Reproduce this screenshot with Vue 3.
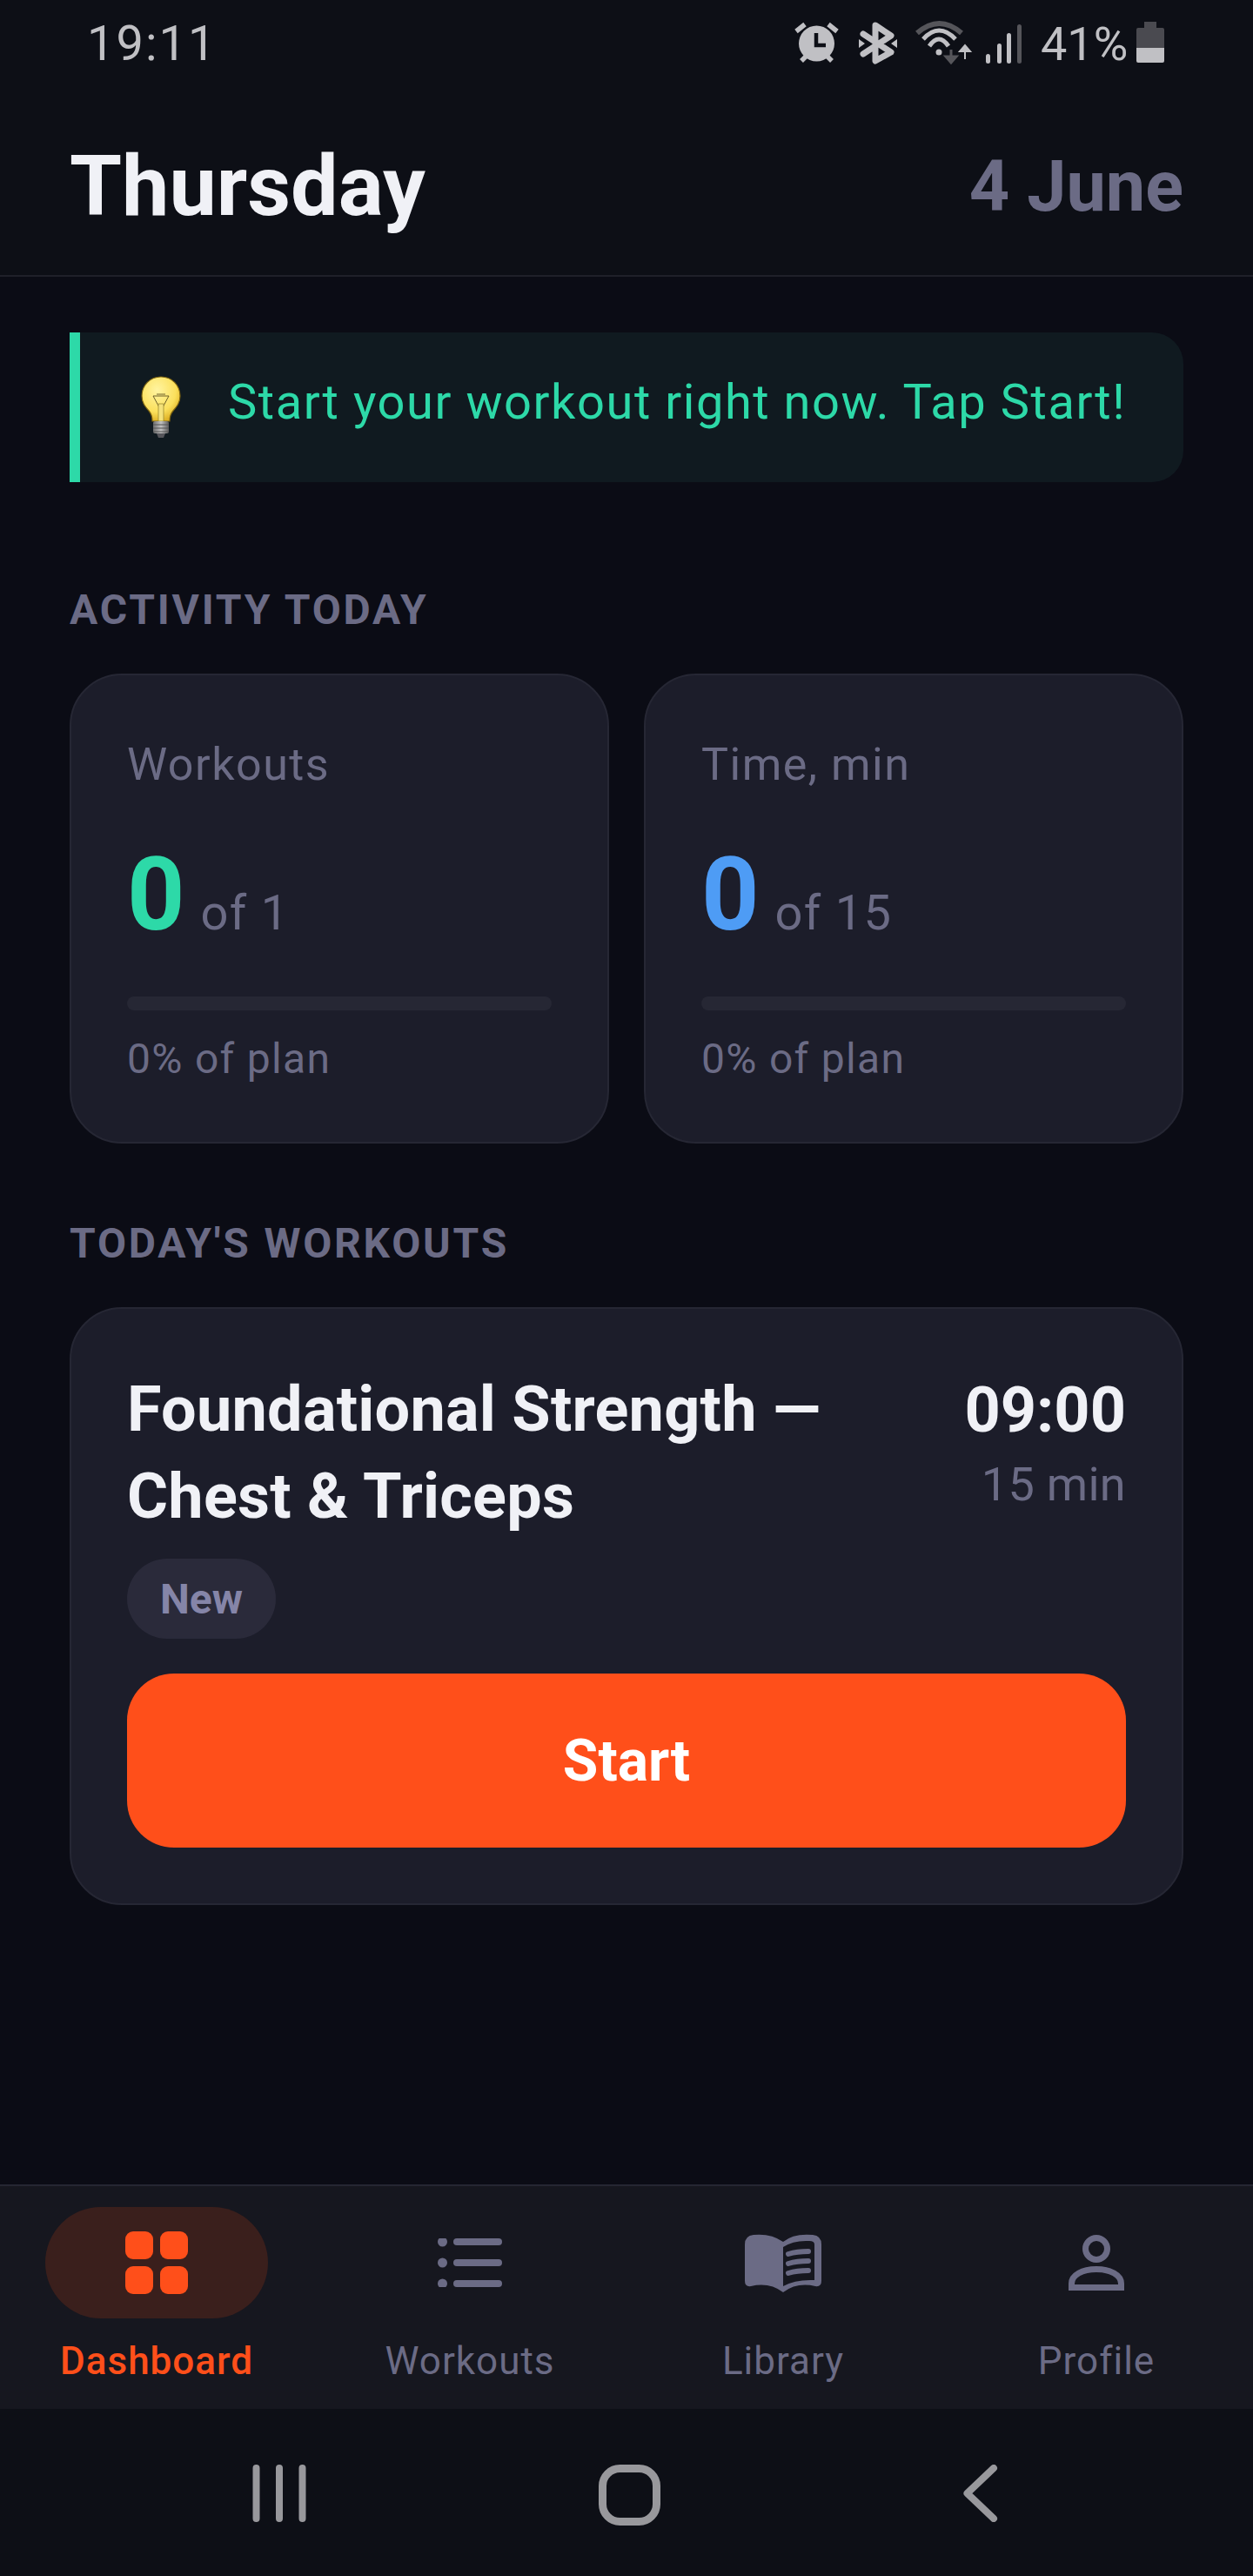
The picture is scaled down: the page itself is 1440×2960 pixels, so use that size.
<script setup>
const stats = [
  { label: 'Workouts', value: 0, total: 'of 1', color: 'green' },
  { label: 'Time, min', value: 0, total: 'of 15', color: 'blue' }
]

const tabs = ['Dashboard', 'Workouts', 'Library', 'Profile']
</script>

<template>
  <div class="screen">
    <div class="status">
      <span class="clock">19:11</span>
      <div class="status-right">
        <svg class="status-icons" viewBox="913 0 261 90" width="261" height="90">
          <!-- alarm -->
          <circle cx="938.5" cy="50" r="20.5" fill="#c0c0c4" />
          <path d="M938 38v14h11" fill="none" stroke="#0d0f16" stroke-width="4.5" />
          <path d="M915 36l10-8M962 36l-10-8M921 70l5-5M956 70l-5-5" stroke="#c0c0c4" stroke-width="5.5" fill="none" />
          <!-- bluetooth -->
          <path d="M992 39L1024 60L1006 70V29L1024 41L992 62" fill="none" stroke="#c0c0c4" stroke-width="7" stroke-linejoin="round" stroke-linecap="round" />
          <path d="M987 45l7 5l-7 5zM1031 45l-7 5l7 5z" fill="#c0c0c4" />
          <!-- wifi -->
          <path d="M1054 38Q1079.500 16 1105 38" fill="none" stroke="#55555a" stroke-width="6" />
          <path d="M1061 45Q1079 25 1098 45M1068 53Q1079 37 1090 53" fill="none" stroke="#c0c0c4" stroke-width="5" />
          <circle cx="1079" cy="60" r="3.500" fill="#c0c0c4" />
          <path d="M1093 57v9M1087 65h12l-6 7z" fill="#55555a" stroke="#55555a" stroke-width="3" />
          <path d="M1109 68v-10M1103 59h12l-6-7z" fill="#c0c0c4" stroke="#c0c0c4" stroke-width="2" />
          <!-- signal -->
          <rect x="1133" y="62" width="5" height="11" rx="2.500" fill="#c0c0c4" />
          <rect x="1146" y="50" width="5" height="23" rx="2.500" fill="#c0c0c4" />
          <rect x="1157" y="38" width="5" height="35" rx="2.500" fill="#c0c0c4" />
          <rect x="1169" y="28" width="5" height="45" rx="2.500" fill="#55555a" />
        </svg>
        <span class="percent">41%</span>
        <svg class="battery" viewBox="0 0 32 47" width="32" height="47">
          <path d="M9 0h14v7h7a2 2 0 0 1 2 2v21H0V9a2 2 0 0 1 2-2h7z" fill="#4a4a50" />
          <path d="M0 30h32v15a2 2 0 0 1-2 2H2a2 2 0 0 1-2-2z" fill="#c0c0c4" />
        </svg>
      </div>
    </div>

    <header class="header">
      <h1>Thursday</h1>
      <span class="date">4 June</span>
    </header>

    <main class="content">
      <div class="tip">
        <svg class="bulb" viewBox="0 0 46 72" width="46" height="72">
          <defs>
            <radialGradient id="glass" cx="0.4" cy="0.3" r="0.7">
              <stop offset="0" stop-color="#fff4a0" />
              <stop offset="0.7" stop-color="#fbe05c" />
              <stop offset="1" stop-color="#e0b428" />
            </radialGradient>
            <linearGradient id="base" x1="0" x2="1" y1="0" y2="0">
              <stop offset="0" stop-color="#6e6e6e" />
              <stop offset="0.5" stop-color="#c2c2c2" />
              <stop offset="1" stop-color="#5c5c5c" />
            </linearGradient>
          </defs>
          <path d="M23 1C10.500 1 1 10.500 1 23c0 8 4 12.500 8 17c3 3.500 4 7 4 12h20c0-5 1-8.500 4-12c4-4.500 8-9 8-17C45 10.500 35.500 1 23 1z" fill="url(#glass)" stroke="#7d6410" stroke-width="1.200" />
          <path d="M14 23l7 13M32 23l-7 13M14 23h18M18 21h10" fill="none" stroke="#5e5020" stroke-width="0.900" />
          <rect x="20" y="32" width="6" height="20" fill="#f4e27a" stroke="#9c8a30" stroke-width="0.800" />
          <rect x="14" y="52" width="18" height="14" rx="2" fill="url(#base)" />
          <path d="M14 56h18M14 60h18M14 64h18" stroke="#555" stroke-width="1" />
          <path d="M18 66h10l-2 5h-6z" fill="#55555a" />
        </svg>
        <span class="tip-text">Start your workout right now. Tap Start!</span>
      </div>

      <h2 class="section-title">ACTIVITY TODAY</h2>
      <div class="stats">
        <div v-for="stat in stats" :key="stat.label" class="stat-card">
          <div class="stat-label">{{ stat.label }}</div>
          <div class="stat-value">
            <span class="num" :class="stat.color">{{ stat.value }}</span>
            <span class="total">{{ stat.total }}</span>
          </div>
          <div class="track"></div>
          <div class="plan">0% of plan</div>
        </div>
      </div>

      <h2 class="section-title second">TODAY'S WORKOUTS</h2>
      <div class="workout">
        <div class="workout-top">
          <div class="workout-title">Foundational Strength —<br />Chest &amp; Triceps</div>
          <div class="workout-time">
            <div class="time">09:00</div>
            <div class="duration">15 min</div>
          </div>
        </div>
        <span class="badge">New</span>
        <button class="start">Start</button>
      </div>
    </main>

    <nav class="tabs">
      <div v-for="(tab, i) in tabs" :key="tab" class="tab" :class="{ active: i === 0 }">
        <div class="tab-icon">
          <svg v-if="i === 0" viewBox="0 0 72 72" width="72" height="72">
            <rect x="0" y="0" width="32" height="32" rx="9" />
            <rect x="40" y="0" width="32" height="32" rx="9" />
            <rect x="0" y="40" width="32" height="32" rx="9" />
            <rect x="40" y="40" width="32" height="32" rx="9" />
          </svg>
          <svg v-else-if="i === 1" viewBox="0 0 74 56" width="74" height="56">
            <circle cx="5.500" cy="4" r="5.500" />
            <circle cx="5.500" cy="28" r="5.500" />
            <circle cx="5.500" cy="52" r="5.500" />
            <rect x="18" y="0" width="56" height="8" rx="4" />
            <rect x="18" y="24" width="56" height="8" rx="4" />
            <rect x="18" y="48" width="56" height="8" rx="4" />
          </svg>
          <svg v-else-if="i === 2" viewBox="0 0 88 67" width="88" height="67">
            <path fill-rule="evenodd" d="M0 12Q0 2 10 1Q30 -1 44 9Q56 -1 78 1Q88 2 88 12V54Q88 61 81 60Q60 55 44 67Q28 55 7 60Q0 61 0 54ZM44 15V60Q58 52 80 53V12Q80 8 74 8Q56 7 44 15Z" />
            <path class="book-lines" d="M50 23Q60 20 73 20M50 34Q60 31 73 31M50 45Q60 42 73 42" />
          </svg>
          <svg v-else viewBox="0 0 64 64" width="64" height="64" class="outline">
            <ellipse cx="32" cy="16" rx="12.500" ry="12.500" />
            <path d="M3.500 60.500V56C3.500 46 16 39.500 32 39.500S60.500 46 60.500 56V60.500Z" />
          </svg>
        </div>
        <span class="tab-label">{{ tab }}</span>
      </div>
    </nav>

    <div class="system-nav">
      <svg viewBox="0 0 62 66" width="62" height="66">
        <path d="M4.500 4v58M31 4v58M57.500 4v58" stroke="#98989c" stroke-width="8" stroke-linecap="round" />
      </svg>
      <svg viewBox="0 0 71 70" width="71" height="70">
        <rect x="4.500" y="4.500" width="62" height="61" rx="20" fill="none" stroke="#98989c" stroke-width="9" />
      </svg>
      <svg class="back" viewBox="0 0 40 66" width="40" height="66">
        <path d="M35 4L4.500 33L35 62" fill="none" stroke="#98989c" stroke-width="8" stroke-linecap="round" stroke-linejoin="round" />
      </svg>
    </div>
  </div>
</template>

<style>
html, body {
  background: #0d0f16;
}
</style>

<style scoped>
.screen {
  display: flex;
  flex-direction: column;
  width: 1440px;
  height: 2960px;
  background: #0b0c15;
  font-family: Roboto, "Noto Sans", sans-serif;
  color: #f0f1f6;
}

.status {
  display: flex;
  justify-content: space-between;
  height: 90px;
  padding: 0 102px 0 100px;
  color: #c0c0c4;
  background: #0d0f16;
}

.clock {
  font-size: 56px;
  line-height: 100px;
  letter-spacing: 2px;
}

.status-right {
  display: flex;
}

.status-icons {
  display: block;
}

.percent {
  width: 100px;
  margin: 0 10px 0 22px;
  font-size: 54px;
  line-height: 102px;
  white-space: nowrap;
}

.battery {
  margin-top: 25px;
}

.header {
  display: flex;
  align-items: center;
  justify-content: space-between;
  height: 228px;
  box-sizing: border-box;
  padding: 22px 80px 0;
  border-bottom: 2px solid #1f2029;
  background: #0d0f16;
}

.header h1 {
  margin: 0;
  font-size: 97px;
  font-weight: 700;
}

.date {
  font-size: 81px;
  font-weight: 700;
  color: #6b6b85;
}

.content {
  flex: 1;
  padding: 64px 80px 0;
}

.tip {
  display: flex;
  align-items: center;
  gap: 54px;
  height: 172px;
  padding-left: 70px;
  border-left: 12px solid #2dd9a8;
  border-radius: 0 36px 36px 0;
  background: #101a20;
  color: #2dd9a8;
  font-size: 56px;
  letter-spacing: 1.550px;
}

.tip-text {
  padding-bottom: 12px;
}

.section-title {
  margin: 119px 0 45px;
  font-size: 48px;
  line-height: 56px;
  font-weight: 700;
  letter-spacing: 2.800px;
  color: #6b6b85;
}

.section-title.second {
  margin-top: 87px;
}

.stats {
  display: grid;
  grid-template-columns: 1fr 1fr;
  gap: 40px;
}

.stat-card {
  height: 540px;
  padding: 73px 64px 0;
  box-sizing: border-box;
  border: 2px solid #262734;
  border-radius: 60px;
  background: #1c1d2a;
}

.stat-label {
  font-size: 52px;
  line-height: 60px;
  letter-spacing: 1.500px;
  color: #6b6b85;
}

.stat-value {
  display: flex;
  align-items: baseline;
  gap: 18px;
  margin-top: 49px;
  height: 140px;
}

.num {
  font-size: 116px;
  line-height: 140px;
  font-weight: 700;
}

.num.green {
  color: #2dd9a8;
}

.num.blue {
  color: #4e9cf5;
}

.total {
  font-size: 56px;
  letter-spacing: 1.300px;
  color: #6b6b85;
}

.track {
  height: 16px;
  margin-top: 47px;
  border-radius: 8px;
  background: #262734;
}

.plan {
  margin-top: 26px;
  font-size: 48px;
  line-height: 60px;
  letter-spacing: 1.300px;
  color: #6b6b85;
}

.workout {
  display: flex;
  flex-direction: column;
  align-items: flex-start;
  padding: 64px;
  border: 2px solid #262734;
  border-radius: 60px;
  background: #1c1d2a;
}

.workout-top {
  display: flex;
  justify-content: space-between;
  width: 100%;
}

.workout-title {
  padding-top: 2px;
  font-size: 72px;
  line-height: 100px;
  font-weight: 700;
  letter-spacing: 0.250px;
}

.workout-time {
  padding-top: 3px;
  text-align: right;
}

.time {
  font-size: 72px;
  line-height: 100px;
  font-weight: 700;
}

.duration {
  font-size: 54px;
  line-height: 70px;
  letter-spacing: 0.300px;
  color: #6b6b85;
}

.badge {
  width: 171px;
  height: 92px;
  margin-top: 21px;
  border-radius: 46px;
  background: #2a2a3a;
  color: #8585a8;
  font-size: 48px;
  font-weight: 700;
  line-height: 94px;
  text-align: center;
}

.start {
  width: 100%;
  height: 200px;
  margin-top: 40px;
  border: 0;
  border-radius: 54px;
  background: #ff4f1a;
  color: #fff;
  font-family: inherit;
  font-size: 66px;
  font-weight: 700;
}

.tabs {
  display: grid;
  grid-template-columns: repeat(4, 1fr);
  height: 258px;
  box-sizing: border-box;
  border-top: 2px solid #252632;
  background: #16171f;
}

.tab {
  display: flex;
  flex-direction: column;
  align-items: center;
  padding-top: 24px;
  color: #6b6b85;
}

.tab-icon {
  display: flex;
  align-items: center;
  justify-content: center;
  width: 256px;
  height: 128px;
  border-radius: 64px;
}

.tab-icon svg {
  fill: #6b6b85;
}

.tab-icon svg.outline {
  fill: none;
  stroke: #6b6b85;
  stroke-width: 7;
}

.book-lines {
  fill: none;
  stroke: #6b6b85;
  stroke-width: 6;
  stroke-linecap: round;
}

.tab.active .tab-icon {
  background: #3a1f1c;
}

.tab.active .tab-icon svg {
  fill: #ff4f1a;
}

.tab-label {
  margin-top: 19px;
  font-size: 44px;
  line-height: 60px;
  letter-spacing: 1px;
}

.tab.active .tab-label {
  color: #ff4f1a;
  font-weight: 500;
}

.system-nav {
  display: grid;
  grid-template-columns: repeat(3, 402px);
  justify-content: center;
  justify-items: center;
  height: 192px;
  padding: 64px 0 0 6px;
  box-sizing: border-box;
  background: #0d0f16;
}

.back {
  margin-left: 3px;
}
</style>
